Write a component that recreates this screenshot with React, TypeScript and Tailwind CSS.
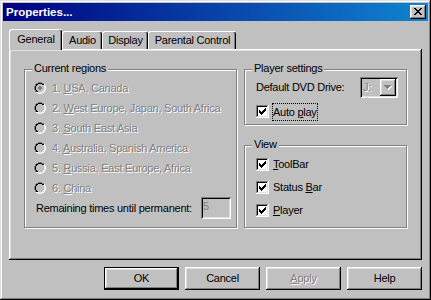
import type { ReactNode } from "react";

const RAISED = "shadow-[inset_-1px_-1px_0_#000,inset_1px_1px_0_#fff,inset_-2px_-2px_0_#808080,inset_2px_2px_0_#dfdfdf]";
const DEFAULT_BTN = "shadow-[inset_0_0_0_1px_#000,inset_-2px_-2px_0_#000,inset_2px_2px_0_#fff,inset_-3px_-3px_0_#808080,inset_3px_3px_0_#dfdfdf]";
const SUNKEN = "shadow-[inset_1px_1px_0_#808080,inset_-1px_-1px_0_#fff,inset_2px_2px_0_#000,inset_-2px_-2px_0_#dfdfdf]";
const DISABLED = "text-[#808080] [text-shadow:1px_1px_0_#fff]";

const RADIO = [
  "....gggg....",
  "..ggkkkkgg..",
  ".gkkffffkkw.",
  ".gkfffffflw.",
  "gkfffddffflw",
  "gkffddddfflw",
  "gkffddddfflw",
  "gkfffddffflw",
  ".gkfffffflw.",
  ".gkkffffllw.",
  "..wwllllww..",
  "....wwww....",
];

const CHECK = [
  "ggggggggggggw",
  "gkkkkkkkkkklw",
  "gkffffffffflw",
  "gkfffffffcflw",
  "gkffffffccflw",
  "gkfcfffcccflw",
  "gkfccfcccfflw",
  "gkfcccccffflw",
  "gkffcccfffflw",
  "gkfffcffffflw",
  "gkffffffffflw",
  "glllllllllllw",
  "wwwwwwwwwwwww",
];

const CLOSE = [
  "cc....cc",
  ".cc..cc.",
  "..cccc..",
  "...cc...",
  "..cccc..",
  ".cc..cc.",
  "cc....cc",
];

const ARROW = [
  "ggggggg.",
  ".gggggww",
  "..gggww.",
  "...gww..",
  "....w...",
];

function Pixels({ rows, colors }: { rows: string[]; colors: Record<string, string> }) {
  return (
    <svg width={rows[0].length} height={rows.length} shapeRendering="crispEdges" className="block shrink-0">
      {rows.map((row, y) =>
        row.split("").map((ch, x) =>
          colors[ch] ? <rect key={x + "-" + y} x={x} y={y} width="1" height="1" fill={colors[ch]} /> : null
        )
      )}
    </svg>
  );
}

function Radio({ on }: { on?: boolean }) {
  return (
    <Pixels
      rows={RADIO}
      colors={{ g: "#808080", k: "#000", l: "#dfdfdf", w: "#fff", f: "#c0c0c0", d: on ? "#808080" : "#c0c0c0" }}
    />
  );
}

function Check() {
  return <Pixels rows={CHECK} colors={{ g: "#808080", k: "#000", l: "#dfdfdf", w: "#fff", f: "#fff", c: "#000" }} />;
}

function Group({ label, className, children }: { label: string; className: string; children: ReactNode }) {
  return (
    <div className={"relative border border-[#808080] shadow-[inset_1px_1px_0_#fff,1px_1px_0_#fff] " + className}>
      <span className="absolute -top-[8px] left-[7px] bg-[#c0c0c0] px-[2px] leading-[13px]">{label}</span>
      {children}
    </div>
  );
}

function Tab({ children, className, selected }: { children: ReactNode; className: string; selected?: boolean }) {
  return (
    <div
      className={
        (selected ? "relative z-10 h-[21px] -mb-px pb-[2px] " : "h-[18px] ") +
        "flex items-center justify-center bg-[#c0c0c0] border-l border-t border-white rounded-tl-[3px] rounded-tr-[2px] shadow-[inset_-1px_0_0_#000,inset_-2px_0_0_#808080] " +
        className
      }
    >
      {children}
    </div>
  );
}

function Btn({ children, def }: { children: ReactNode; def?: boolean }) {
  return (
    <button type="button" className={"w-[75px] h-[23px] flex items-center justify-center bg-[#c0c0c0] " + (def ? DEFAULT_BTN : RAISED)}>
      {children}
    </button>
  );
}

const REGIONS = [
  { n: "1. ", a: "U", rest: "SA, Canada", on: true },
  { n: "2. ", a: "W", rest: "est Europe, Japan, South Africa" },
  { n: "3. ", a: "S", rest: "outh East Asia" },
  { n: "4. ", a: "A", rest: "ustralia, Spanish America" },
  { n: "5. ", a: "R", rest: "ussia, East Europe, Africa" },
  { n: "6. ", a: "C", rest: "hina" },
];

const VIEW = [
  { pre: "", a: "T", rest: "oolBar" },
  { pre: "Status ", a: "B", rest: "ar" },
  { pre: "", a: "P", rest: "layer" },
];

export default function App() {
  return (
    <div className="w-[431px] h-[300px] bg-[#c0c0c0] p-[3px] flex flex-col font-['Liberation_Sans',Arial,sans-serif] text-[11px] leading-[13px] tracking-[-0.25px] text-black shadow-[inset_-1px_-1px_0_#000,inset_1px_1px_0_#dfdfdf,inset_-2px_-2px_0_#808080,inset_2px_2px_0_#fff]">
      <div className="h-[18px] flex items-center justify-between pl-[3px] pr-[2px] bg-[linear-gradient(to_right,#000080,#1084d0)]">
        <span className="text-[11.5px] font-bold text-white tracking-normal">Properties...</span>
        <button type="button" className={"w-[16px] h-[14px] bg-[#c0c0c0] flex items-start pl-[4px] pt-[3px] " + RAISED}>
          <Pixels rows={CLOSE} colors={{ c: "#000" }} />
        </button>
      </div>

      <div className="mt-[8px] px-[6px]">
        <div className="h-[20px] flex items-end">
          <Tab selected className="w-[53px]">General</Tab>
          <Tab className="w-[40px]">Audio</Tab>
          <Tab className="w-[46px]">Display</Tab>
          <Tab className="w-[88px]">Parental Control</Tab>
        </div>

        <div className={"h-[211px] flex gap-[7px] pt-[20px] pl-[15px] " + RAISED}>
          <Group label="Current regions" className="w-[213px] h-[159px] pt-[8px] pl-[9px]">
            {REGIONS.map((r) => (
              <div key={r.n} className="h-[20px] flex items-center gap-[6px]">
                <Radio on={r.on} />
                <span className={DISABLED}>
                  {r.n}
                  <u>{r.a}</u>
                  {r.rest}
                </span>
              </div>
            ))}
            <div className="h-[22px] -mt-px ml-[2px] flex items-center">
              <span>Remaining times until permanent:</span>
              <div className={"ml-auto mr-[5px] w-[30px] h-[22px] flex items-start pl-[2px] pt-[3px] bg-[#c0c0c0] text-[#808080] " + SUNKEN}>
                5
              </div>
            </div>
          </Group>

          <div className="w-[163px] flex flex-col">
            <Group label="Player settings" className="h-[56px] pt-[7px] pl-[11px] pr-[8px]">
              <div className="h-[21px] flex items-center">
                <span>Default DVD Drive:</span>
                <div className={"ml-auto w-[38px] h-[21px] p-[2px] flex bg-[#c0c0c0] " + SUNKEN}>
                  <span className={"pl-[1px] pt-[2px] " + DISABLED}>J:</span>
                  <div className={"ml-auto w-[16px] h-[17px] flex items-center justify-center bg-[#c0c0c0] " + RAISED}>
                    <Pixels rows={ARROW} colors={{ g: "#808080", w: "#fff" }} />
                  </div>
                </div>
              </div>
              <div className="mt-[4px] h-[19px] flex items-center gap-[3px]">
                <Check />
                <span className="border border-dotted border-black leading-[16px]">
                  Auto <u>p</u>lay
                </span>
              </div>
            </Group>

            <Group label="View" className="mt-[20px] h-[83px] pt-[7px] pl-[11px]">
              {VIEW.map((v) => (
                <div key={v.a} className="h-[23px] flex items-center gap-[4px]">
                  <Check />
                  <span>
                    {v.pre}
                    <u>{v.a}</u>
                    {v.rest}
                  </span>
                </div>
              ))}
            </Group>
          </div>
        </div>

        <div className="mt-[7px] flex justify-end gap-[6px]">
          <Btn def>OK</Btn>
          <Btn>Cancel</Btn>
          <Btn>
            <span className={DISABLED}>
              <u>A</u>pply
            </span>
          </Btn>
          <Btn>Help</Btn>
        </div>
      </div>
    </div>
  );
}
